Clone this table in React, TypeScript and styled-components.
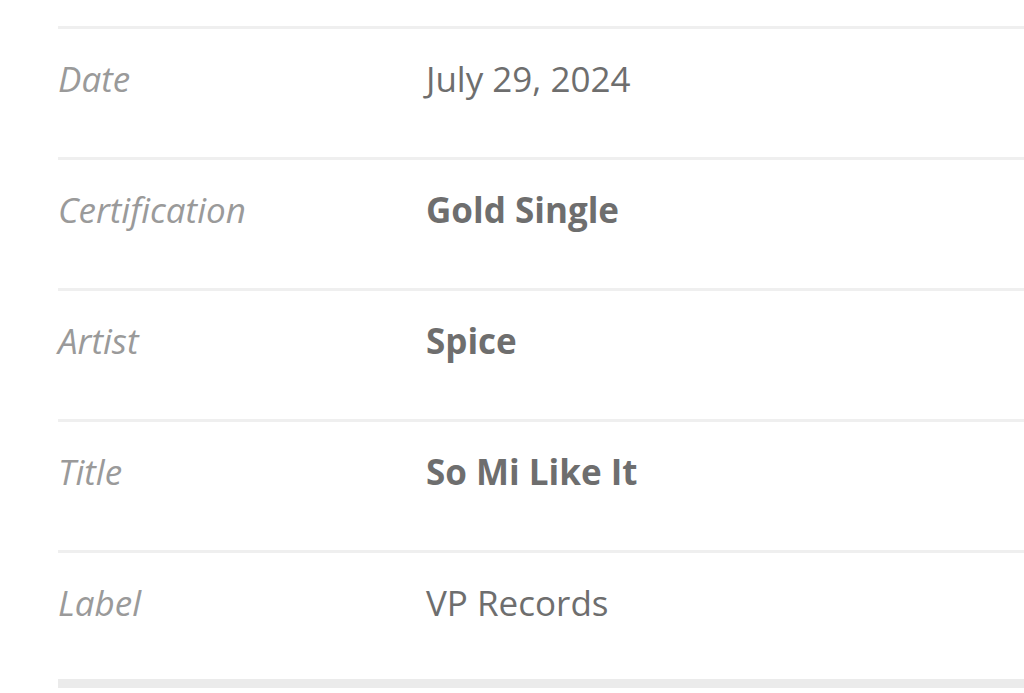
import React from "react";
import styled, { createGlobalStyle } from "styled-components";

const Global = createGlobalStyle`
  html, body { margin: 0; padding: 0; background: #fff; }
  body { font-family: "Open Sans", "Liberation Sans", sans-serif; overflow: hidden; }
`;

const Page = styled.div`
  padding-top: 26px;
  padding-left: 58px;
`;

const Table = styled.div`
  display: flex;
  flex-direction: column;
  border-bottom: 9px solid #ebebeb;
`;

const Row = styled.div<{ $last?: boolean }>`
  display: grid;
  grid-template-columns: 368px 1fr;
  border-top: 3px solid #efefef;
  padding: 24px 0 ${(p) => (p.$last ? 50 : 52)}px;
  height: 52px;
  box-sizing: content-box;
`;

const Label = styled.div`
  font-style: italic;
  font-size: 35px;
  line-height: 52px;
  color: #9a9a9a;
`;

const Value = styled.div<{ $bold?: boolean }>`
  font-size: 35px;
  line-height: 52px;
  color: #6e6e6e;
  font-weight: ${(p) => (p.$bold ? 700 : 400)};
`;

const rows = [
  { label: "Date", value: "July 29, 2024", bold: false },
  { label: "Certification", value: "Gold Single", bold: true },
  { label: "Artist", value: "Spice", bold: true },
  { label: "Title", value: "So Mi Like It", bold: true },
  { label: "Label", value: "VP Records", bold: false },
];

export default function App() {
  return (
    <>
      <Global />
      <Page>
        <Table>
          {rows.map((r, i) => (
            <Row key={r.label} $last={i === rows.length - 1}>
              <Label>{r.label}</Label>
              <Value $bold={r.bold}>{r.value}</Value>
            </Row>
          ))}
        </Table>
      </Page>
    </>
  );
}
